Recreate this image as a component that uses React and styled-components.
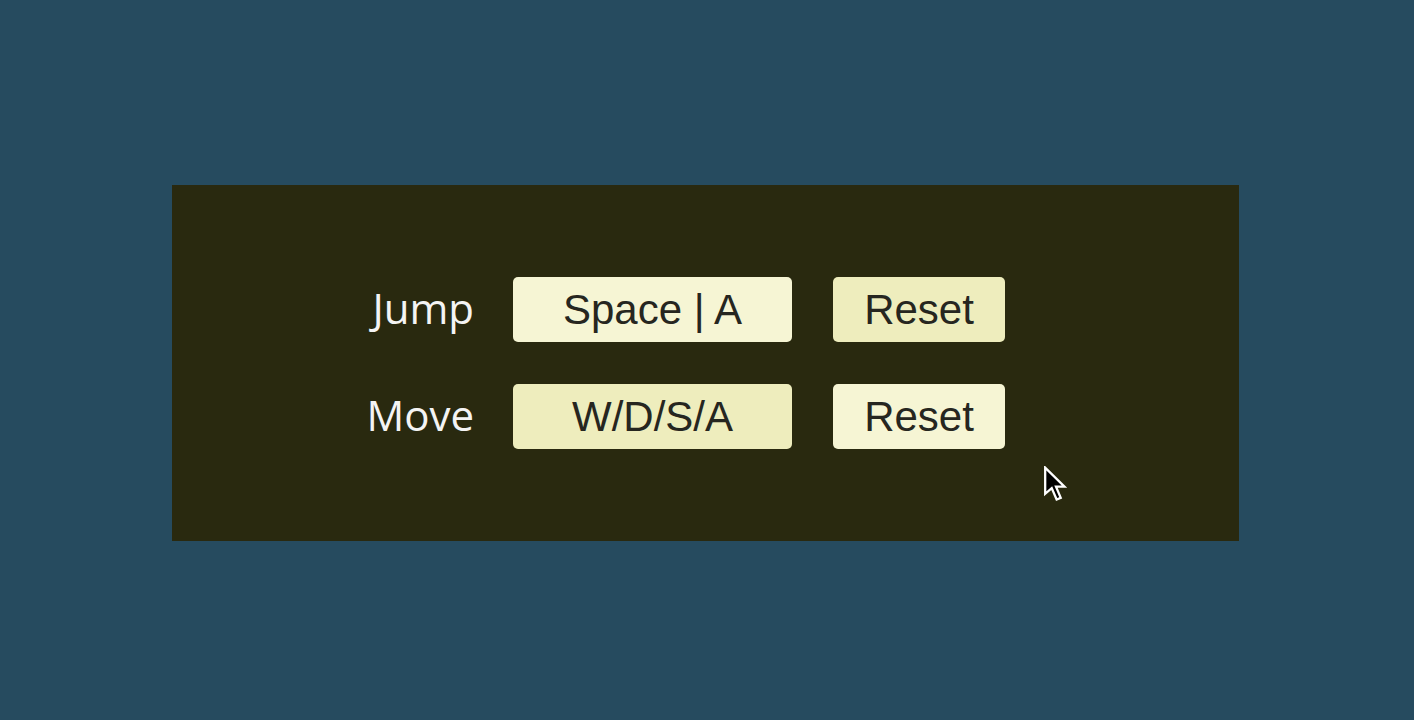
import React from 'react';
import styled, { createGlobalStyle } from 'styled-components';

const GlobalStyle = createGlobalStyle`
  html, body {
    margin: 0;
    padding: 0;
    background: #264b5f;
  }
  body {
    font-family: 'Liberation Sans', Arial, sans-serif;
  }
`;

const bindings = [
  { id: 'jump', label: 'Jump', keys: 'Space | A', keyTone: 'light', resetTone: 'dark' },
  { id: 'move', label: 'Move', keys: 'W/D/S/A', keyTone: 'dark', resetTone: 'light' },
];

const App = () => {
  return (
    <>
      <GlobalStyle />
      <Page>
        <Panel>
          <Grid>
            {bindings.map((item) => (
              <React.Fragment key={item.id}>
                <Label>{item.label}</Label>
                <KeyButton tone={item.keyTone}>{item.keys}</KeyButton>
                <ResetButton tone={item.resetTone}>Reset</ResetButton>
              </React.Fragment>
            ))}
          </Grid>
          <Cursor viewBox="0 0 14 22" width="24" height="36">
            <path
              d="M1 1 L1 17 L5 13.5 L8 20.5 L10.5 19.5 L7.6 12.6 L12.8 12.6 Z"
              fill="#000"
              stroke="#fff"
              strokeWidth="1.4"
              strokeLinejoin="miter"
            />
          </Cursor>
        </Panel>
      </Page>
    </>
  );
};

export default App;

const Page = styled.div`
  min-height: 100vh;
  box-sizing: border-box;
  padding: 185px 0 0 172px;
`;

const Panel = styled.section`
  position: relative;
  width: 1067px;
  height: 356px;
  box-sizing: border-box;
  background: #29290f;
  padding: 92px 0 0 161px;
`;

const Grid = styled.div`
  display: grid;
  grid-template-columns: 140px 279px 172px;
  grid-auto-rows: 65px;
  column-gap: 40px;
  row-gap: 42px;
  align-items: center;
`;

const Label = styled.div`
  font-family: 'Open Sans', 'DejaVu Sans', sans-serif;
  font-size: 42px;
  color: #f4f4f4;
  text-align: right;
  line-height: 1;
  padding-bottom: 3px;
  margin-right: -1px;
`;

const Button = styled.button`
  height: 65px;
  border: none;
  border-radius: 5px;
  font-family: 'Liberation Sans', Arial, sans-serif;
  font-size: 42px;
  color: #262620;
  background: ${({ tone }) => (tone === 'dark' ? '#eeedbd' : '#f6f5d4')};
  padding: 0;
  margin: 0;
  cursor: pointer;
  line-height: 1;
`;

const KeyButton = styled(Button)`
  width: 279px;
`;

const ResetButton = styled(Button)`
  width: 172px;
  margin-left: 1px;
`;

const Cursor = styled.svg`
  position: absolute;
  left: 871px;
  top: 281px;
`;
